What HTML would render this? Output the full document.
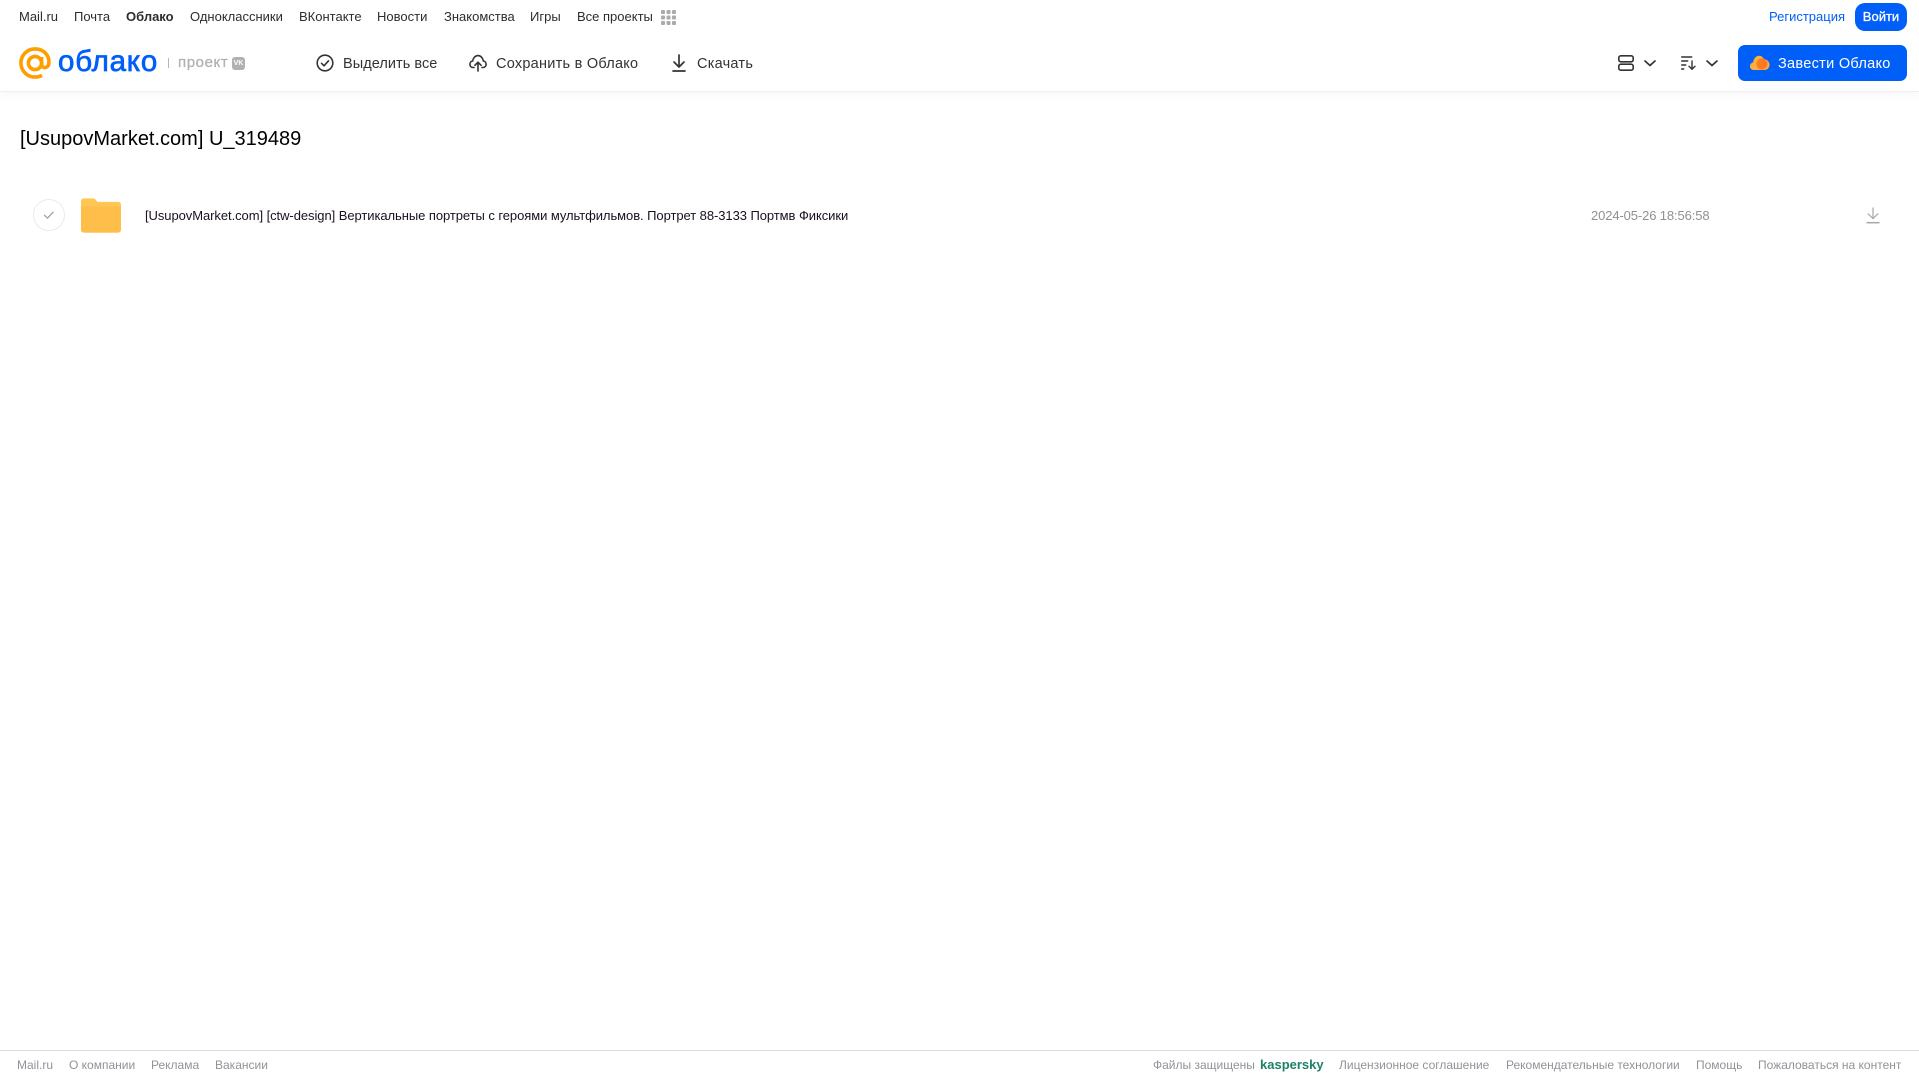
<!DOCTYPE html>
<html lang="ru"><head><meta charset="utf-8"><title>Облако</title>
<style>
html,body{margin:0;padding:0;background:#fff;width:1919px;height:1079px;overflow:hidden}
body{position:relative;font-family:"Liberation Sans",sans-serif;color:#2c2d2e}
.t{position:absolute;white-space:nowrap;line-height:20px}
.n{font-size:13px;top:7px;color:#2c2d2e}
.b{font-size:14.5px;top:53.5px;color:#333;letter-spacing:.25px}
.f{font-size:12px;top:1055px;color:#919399}
svg{position:absolute;overflow:visible}
#hd{position:absolute;left:0;top:0;width:1919px;height:91px;background:#fff;box-shadow:0 1px 0 #f0f0f0,0 2px 10px rgba(0,0,0,.05)}
</style></head><body>
<div id="hd"></div>
<span class="t n" style="left:19px">Mail.ru</span>
<span class="t n" style="left:74px">Почта</span>
<span class="t n" style="left:126px;font-weight:700">Облако</span>
<span class="t n" style="left:190px">Одноклассники</span>
<span class="t n" style="left:299px">ВКонтакте</span>
<span class="t n" style="left:377px">Новости</span>
<span class="t n" style="left:444px">Знакомства</span>
<span class="t n" style="left:530px">Игры</span>
<span class="t n" style="left:577px">Все проекты</span>
<svg style="left:661px;top:10px" width="15" height="15" fill="#a9abaf"><rect x="0" y="0" width="4" height="4" rx="1"/><rect x="5.5" y="0" width="4" height="4" rx="1"/><rect x="11" y="0" width="4" height="4" rx="1"/><rect x="0" y="5.5" width="4" height="4" rx="1"/><rect x="5.5" y="5.5" width="4" height="4" rx="1"/><rect x="11" y="5.5" width="4" height="4" rx="1"/><rect x="0" y="11" width="4" height="4" rx="1"/><rect x="5.5" y="11" width="4" height="4" rx="1"/><rect x="11" y="11" width="4" height="4" rx="1"/></svg>
<span class="t n" style="left:1769px;color:#005ff9">Регистрация</span>
<div class="t" style="left:1855px;top:3px;width:52px;height:28px;background:#005ff9;border-radius:10px;color:#fff;font-size:13px;line-height:28px;text-align:center;-webkit-text-stroke:.3px #fff">Войти</div>

<svg style="left:19px;top:47px" width="32" height="32" viewBox="0 0 32 32" fill="none" stroke="#ff9e00" stroke-width="3.6"><circle cx="16" cy="16" r="6.6"/><path d="M22.6 10v7.5c0 4.2 6.8 4.2 7.3-1.2C30.6 8.2 24.500 1.900 16 1.900 8.200 1.900 1.900 8.200 1.900 16S8.200 30.100 16 30.100c2.800 0 5-.6 7-1.800"/></svg>
<span class="t" style="left:58px;top:45px;font-size:29.500px;line-height:34px;color:#005ff9;-webkit-text-stroke:.7px #005ff9;letter-spacing:.8px">облако</span>
<div style="position:absolute;left:168px;top:58px;width:1px;height:10px;background:#b5b6b9"></div>
<span class="t" style="left:178px;top:53px;font-size:15px;color:#b0b1b5;letter-spacing:.6px;-webkit-text-stroke:.3px #b0b1b5">проект</span>
<div class="t" style="left:232px;top:57px;width:13px;height:13px;background:#b0b1b5;border-radius:3px;color:#fff;font-size:7px;line-height:13px;text-align:center;font-weight:700">VK</div>

<svg style="left:316px;top:54px" width="18" height="18" viewBox="0 0 18 18" fill="none" stroke="#333" stroke-width="1.600"><circle cx="9" cy="9" r="7.800"/><path d="M5.500 9.300l2.500 2.500 4.500-5" stroke-linecap="round" stroke-linejoin="round"/></svg>
<span class="t b" style="left:343px;letter-spacing:.05px">Выделить все</span>
<svg style="left:469px;top:54px" width="18" height="18" viewBox="0 0 18 18" fill="none" stroke="#333" stroke-width="1.600" stroke-linecap="round" stroke-linejoin="round"><path d="M5 13.500H4.200C2 13.500.9 11.800.9 10.200c0-1.700 1.300-3 2.800-3.200C4 4 6.300 1.600 9 1.600c2.800 0 4.900 2.300 5.300 5.400 1.600.2 2.800 1.500 2.800 3.200 0 1.600-1.100 3.300-3.300 3.300H13"/><path d="M9 17V8.500M5.900 11.300L9 8.200l3.100 3.100"/></svg>
<span class="t b" style="left:496px">Сохранить в Облако</span>
<svg style="left:671px;top:54px" width="16" height="18" viewBox="0 0 16 18" fill="none" stroke="#333" stroke-width="1.700" stroke-linecap="round" stroke-linejoin="round"><path d="M8 1v11.500M3 8l5 5 5-5"/><path d="M2 17h12"/></svg>
<span class="t b" style="left:697px">Скачать</span>

<svg style="left:1618px;top:55px" width="16" height="16" viewBox="0 0 16 16" fill="none" stroke="#333" stroke-width="1.600"><rect x=".8" y=".8" width="14.400" height="6" rx="2"/><rect x=".8" y="9.200" width="14.400" height="6" rx="2"/></svg>
<svg style="left:1644px;top:60px" width="12" height="7" viewBox="0 0 12 7" fill="none" stroke="#333" stroke-width="1.700" stroke-linecap="round" stroke-linejoin="round"><path d="M1 1l5 4.500L11 1"/></svg>
<svg style="left:1681px;top:56px" width="16" height="14" viewBox="0 0 16 14" fill="none" stroke="#333" stroke-width="1.400" stroke-linecap="round" stroke-linejoin="round"><path d="M.7 1h10M.7 5h6M.7 9h4M.7 13h2M11 5v8M8 10.200l3 3 3-3"/></svg>
<svg style="left:1706px;top:60px" width="12" height="7" viewBox="0 0 12 7" fill="none" stroke="#333" stroke-width="1.700" stroke-linecap="round" stroke-linejoin="round"><path d="M1 1l5 4.500L11 1"/></svg>
<div style="position:absolute;left:1738px;top:45px;width:169px;height:36px;background:#005ff9;border-radius:7px"></div>
<svg style="left:1750px;top:55px" width="20" height="16" viewBox="0 0 20 16"><path d="M4 15C1.500 15 0 13.200 0 11.200 0 9.300 1.400 7.800 3.100 7.500 3.600 3.600 6.100 .8 9 .8c2.400 0 4 1.500 5 3.500 3.500.2 5.500 2.700 5.500 5.500 0 2.900-2 5.200-5 5.200z" fill="#ffb03a"/><circle cx="12" cy="9" r="5.500" fill="#ff7a1f"/></svg>
<span class="t" style="left:1778px;top:53.500px;color:#fff;font-size:14.500px;letter-spacing:.3px">Завести Облако</span>

<span class="t" style="left:20px;top:127px;font-size:20px;line-height:24px;color:#000;letter-spacing:0">[UsupovMarket.com] U_319489</span>

<svg style="left:33px;top:199px" width="32" height="32" viewBox="0 0 32 32" fill="none"><circle cx="16" cy="16" r="15.500" stroke="#ebebeb"/><path d="M11.500 16.300l3 2.900 5.500-6" stroke="#a0a0a0" stroke-width="1.300" stroke-linecap="round" stroke-linejoin="round"/></svg>
<svg style="left:81px;top:198px" width="40" height="35" viewBox="0 0 41 35"><path d="M3 0h9c2 0 3 1 4 2.500l1 1h21c1.700 0 3 1.300 3 3V32c0 1.700-1.300 3-3 3H3c-1.700 0-3-1.300-3-3V3C0 1.300 1.300 0 3 0z" fill="#ffc555"/><path d="M0 8.500h41V32c0 1.700-1.300 3-3 3H3c-1.700 0-3-1.300-3-3z" fill="#ffbe4a"/></svg>
<span class="t" style="left:145px;top:206px;font-size:13px;letter-spacing:-.065px;color:#1a1020">[UsupovMarket.com] [ctw-design] Вертикальные портреты с героями мультфильмов. Портрет 88-3133 Портмв Фиксики</span>
<span class="t" style="left:1591px;top:206px;font-size:13px;letter-spacing:-.12px;color:#8f9094">2024-05-26 18:56:58</span>
<svg style="left:1866px;top:207px" width="14" height="17" viewBox="0 0 14 17" fill="none" stroke="#a6a7aa" stroke-width="1.200"><path d="M7 .5V11.500M1.800 6.500L7 11.700l5.200-5.200"/><path d="M.5 15.700h13" stroke-width="1.500"/></svg>

<div style="position:absolute;left:0;top:1050px;width:1919px;height:1px;background:#dcdcdc"></div>
<span class="t f" style="left:17px">Mail.ru</span>
<span class="t f" style="left:69px">О компании</span>
<span class="t f" style="left:151px">Реклама</span>
<span class="t f" style="left:215px">Вакансии</span>
<span class="t f" style="left:1153px">Файлы защищены</span>
<span class="t f" style="left:1260px;font-size:13px;font-weight:700;color:#1d8268">kaspersky</span>
<span class="t f" style="left:1339px">Лицензионное соглашение</span>
<span class="t f" style="left:1506px">Рекомендательные технологии</span>
<span class="t f" style="left:1696px">Помощь</span>
<span class="t f" style="left:1758px">Пожаловаться на контент</span>
</body></html>
